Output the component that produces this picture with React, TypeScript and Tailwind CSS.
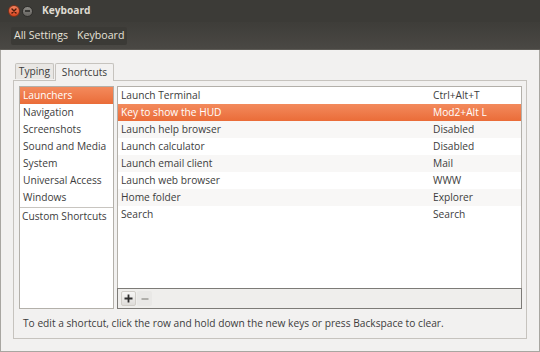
import React from "react";

const leftItems = [
  "Launchers",
  "Navigation",
  "Screenshots",
  "Sound and Media",
  "System",
  "Universal Access",
  "Windows",
];

const rows: [string, string][] = [
  ["Launch Terminal", "Ctrl+Alt+T"],
  ["Key to show the HUD", "Mod2+Alt L"],
  ["Launch help browser", "Disabled"],
  ["Launch calculator", "Disabled"],
  ["Launch email client", "Mail"],
  ["Launch web browser", "WWW"],
  ["Home folder", "Explorer"],
  ["Search", "Search"],
];

export default function App() {
  return (
    <div className="w-[540px] h-[352px] flex flex-col bg-[#f2f1f0] overflow-hidden text-[10.2px] text-[#3c3c3c] font-['Open_Sans','Noto_Sans',sans-serif] whitespace-nowrap">
      {/* Title bar */}
      <div className="h-[22px] bg-[#3c3b37] flex items-center shrink-0">
        <div className="ml-[8px] w-[12px] h-[12px] rounded-full bg-gradient-to-b from-[#f3835f] to-[#d8441d] border border-[#7e3018] flex items-center justify-center">
          <svg width="6" height="6" viewBox="0 0 6 6">
            <path d="M1 1L5 5M5 1L1 5" stroke="#4a1a0c" strokeWidth="1.4" strokeLinecap="round" />
          </svg>
        </div>
        <div className="ml-[2px] w-[11px] h-[11px] rounded-full bg-gradient-to-b from-[#8e8c87] to-[#65635f] border border-[#2f2e2b] flex items-center justify-center">
          <div className="w-[5px] h-[1.5px] bg-[#3a3936]" />
        </div>
        <span className="ml-[9px] text-[10.2px] font-bold text-[#dfdbd2]">Keyboard</span>
      </div>
      {/* Toolbar */}
      <div className="h-[28px] bg-gradient-to-b from-[#3e3d39] to-[#4a4844] border-b border-[#5c5a55] flex items-center shrink-0">
        <div className="ml-[11px] h-[18px] px-[3px] flex items-center gap-[9px] rounded-[2px] bg-[#3b3a36] text-[10.6px] text-[#e6e2d9]">
          <span>All Settings</span>
          <span>Keyboard</span>
        </div>
      </div>
      {/* Content */}
      <div className="flex-1 flex flex-col border-l border-r border-b border-[#a8a6a1] pl-[12px] pr-[12px] pt-[13px] pb-[12px]">
        {/* Tabs */}
        <div className="flex items-end ml-[2px] h-[17px] relative z-10">
          <div className="w-[39px] h-[16px] mb-[1px] border border-b-0 border-[#c6c3be] bg-[#e9e7e4] rounded-t-[2px] flex items-center justify-center">
            Typing
          </div>
          <div className="ml-[1px] w-[59px] h-[18px] -mb-[1px] border border-b-0 border-[#c6c3be] bg-[#f2f1f0] rounded-t-[2px] flex items-center justify-center">
            Shortcuts
          </div>
        </div>
        {/* Panel */}
        <div className="flex-1 border border-[#c6c3be] bg-[#f2f1f0] flex flex-col pl-[5px] pr-[4px] pt-[5px]">
          <div className="flex gap-[3px] h-[223px]">
            {/* Left list */}
            <div className="w-[95px] border border-[#b3b0aa] bg-white flex flex-col">
              {leftItems.map((it, i) => (
                <div
                  key={it}
                  className={
                    i === 0
                      ? "h-[17px] flex items-center pl-[3px] bg-gradient-to-b from-[#f38a5c] to-[#ea6c38] text-white"
                      : "h-[17px] flex items-center pl-[3px]"
                  }
                >
                  {it}
                </div>
              ))}
              <div className="h-px bg-[#c8c5c0] mt-[1px]" />
              <div className="h-[18px] flex items-center pl-[2px]">Custom Shortcuts</div>
            </div>
            {/* Right list */}
            <div className="flex-1 flex flex-col">
              <div className="flex-1 border border-b-0 border-[#b3b0aa] bg-white flex flex-col">
                {rows.map(([a, b], i) => (
                  <div
                    key={a}
                    className={
                      i === 1
                        ? "h-[17px] flex items-center pl-[3px] bg-gradient-to-b from-[#f38a5c] to-[#ea6c38] text-white"
                        : i % 2 === 0 && i > 0
                        ? "h-[17px] flex items-center pl-[3px] bg-[#f8f7f6]"
                        : "h-[17px] flex items-center pl-[3px]"
                    }
                  >
                    <span className="w-[312px]">{a}</span>
                    <span>{b}</span>
                  </div>
                ))}
              </div>
              <div className="h-[21px] border border-[#7d7b77] bg-[#efeeec] flex items-center pl-[3px] gap-[1px]">
                <div className="w-[15px] h-[15px] rounded-[2px] bg-gradient-to-b from-[#f7f6f5] to-[#dedcd9] border border-[#d0cdc8] flex items-center justify-center">
                  <svg width="9" height="9" viewBox="0 0 9 9">
                    <path d="M4.5 0.5V8.5M0.5 4.5H8.5" stroke="#2e2e2e" strokeWidth="1.8" />
                  </svg>
                </div>
                <div className="w-[15px] h-[15px] rounded-[2px] bg-[#e9e8e6] flex items-center justify-center">
                  <svg width="8" height="8" viewBox="0 0 8 8">
                    <path d="M0.5 4H7.5" stroke="#8a8884" strokeWidth="1.2" />
                  </svg>
                </div>
              </div>
            </div>
          </div>
          <div className="flex-1 flex items-center pl-[4px]">
            To edit a shortcut, click the row and hold down the new keys or press Backspace to clear.
          </div>
        </div>
      </div>
    </div>
  );
}
